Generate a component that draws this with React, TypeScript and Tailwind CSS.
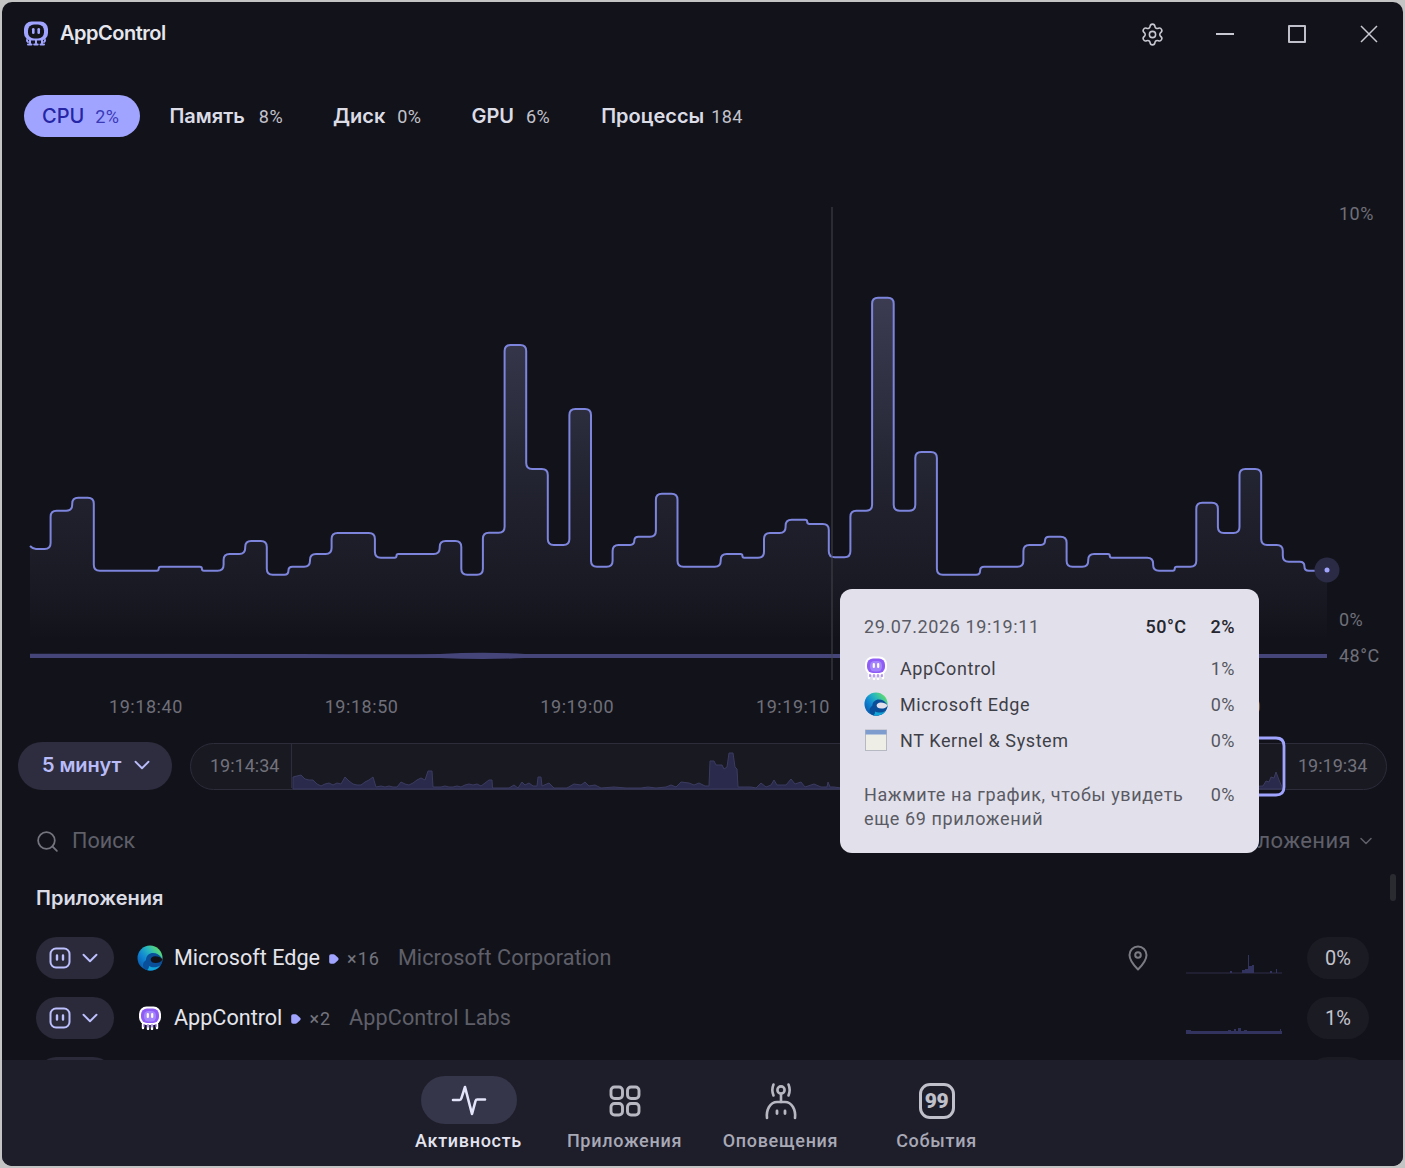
import { ChevronDown, Search, Settings } from "lucide-react";

const steps: [number, number][] = [
  [1, 549], [1, 510.7], [1, 497.7], [3, 570.7], [2, 566.7], [1, 570.7], [1, 554], [1, 541], [1, 574.7], [1, 566.7], [1, 554], [2, 533],
  [1, 557.7], [2, 554], [1, 541], [1, 574.7], [1, 532.7], [1, 345], [1, 469], [1, 545], [1, 409], [1, 566.7], [1, 545], [1, 536.7], [1, 493.7],
  [2, 566.7], [1, 554], [1, 557.7], [1, 533], [1, 519.7], [1, 524], [1, 557.3], [1, 510.7], [1, 297.7], [1, 510.7], [1, 452],
  [2, 574.7], [2, 566.7], [1, 545], [1, 536.7], [1, 566.7], [1, 554], [2, 557.7], [1, 570.7], [1, 566.7], [1, 502.7], [1, 533], [1, 469],
  [1, 545], [1, 561.7], [1, 570.7],
];

function buildLine() {
  const X0 = 30;
  const W = 1297 / 60;
  let i = 0;
  let d = `M${X0} ${steps[0][1] - 3} Q${X0 + 3} ${steps[0][1]} ${X0 + 6} ${steps[0][1]}`;
  for (let k = 0; k < steps.length - 1; k++) {
    i += steps[k][0];
    const x = X0 - 1 + i * W;
    const a = steps[k][1];
    const b = steps[k + 1][1];
    const r = Math.min(6, Math.abs(b - a) / 2);
    const s = b > a ? 1 : -1;
    d += ` L${(x - r).toFixed(1)} ${a} Q${x.toFixed(1)} ${a} ${x.toFixed(1)} ${a + s * r} L${x.toFixed(1)} ${b - s * r} Q${x.toFixed(1)} ${b} ${(x + r).toFixed(1)} ${b}`;
  }
  d += ` L1327 ${steps[steps.length - 1][1]}`;
  return d;
}
const linePath = buildLine();
const areaPath = `${linePath} L1327 640 L30 640 Z`;

const mini: [number, number][] = [
  [292, 12], [296, 13], [300, 14], [304, 10], [308, 9], [312, 9], [316, 5], [320, 3], [324, 5], [328, 6], [332, 4], [336, 6], [340, 5], [344, 12], [348, 8],
  [352, 5], [356, 4], [360, 4], [364, 7], [368, 9], [372, 12], [375, 2], [380, 3], [384, 2], [388, 3], [392, 2], [396, 2], [400, 7], [404, 5], [408, 4],
  [412, 6], [416, 9], [420, 11], [424, 9], [427, 18], [431, 18], [432, 2], [440, 2], [444, 3], [448, 2], [452, 2], [456, 3], [460, 2], [464, 4], [468, 5], [472, 4],
  [476, 5], [480, 3], [484, 6], [488, 9], [491, 9], [491.5, 1], [508, 1], [513, 4], [517, 1], [521, 7], [524, 4], [528, 6], [532, 3], [536, 3], [537, 12], [540, 12], [541, 3], [548, 6], [553, 1], [566, 1],
  [573, 5], [580, 4], [584, 7], [588, 3], [594, 4], [600, 1], [613, 2], [625, 1], [640, 1], [647, 2], [655, 1], [665, 2], [670, 4], [675, 2], [680, 7], [688, 6], [693, 4],
  [698, 6], [704, 3], [708, 3], [709, 28], [713, 28], [715, 24], [721, 24], [723, 20], [726, 22], [728, 36], [732, 36], [734, 22], [736, 20], [737, 2], [750, 2], [755, 1], [760, 6],
  [765, 2], [770, 4], [773, 9], [776, 4], [785, 4], [790, 10], [794, 5], [800, 7], [804, 2], [813, 5], [820, 2], [826, 2], [827, 7], [829, 2], [833, 2], [840, 1],
];
const miniPath = (pts: [number, number][]) => `M${pts[0][0]} 788 ` + pts.map((p) => `L${p[0]} ${788 - p[1]}`).join(" ") + ` L${pts[pts.length - 1][0]} 788 Z`;

function Logo({ size = 26 }: { size?: number }) {
  return (
    <svg width={size} height={size} viewBox="0 0 26 26" fill="none">
      <rect x="1" y="0.5" width="24" height="19" rx="7.5" fill="#a0a4ff" />
      <rect x="5" y="3.5" width="16" height="14" rx="6" fill="#13131a" />
      <rect x="9" y="7" width="2.6" height="6" rx="1.3" fill="#a0a4ff" />
      <rect x="14.4" y="7" width="2.6" height="6" rx="1.3" fill="#a0a4ff" />
      <path d="M7 19v3M13 19v3M19 19v3M5 23.5h3.5M11.2 23.5h3.5M17.5 23.5h3.5M4 19c0 1 .4 1.6 1 2M22 19c0 1-.4 1.6-1 2" stroke="#a0a4ff" strokeWidth="2" strokeLinecap="round" />
    </svg>
  );
}

function AppIcon({ size = 24 }: { size?: number }) {
  return (
    <svg width={size} height={size} viewBox="0 0 24 24" fill="none">
      <rect x="1" y="0.5" width="22" height="18.5" rx="7.5" fill="#fff" />
      <path d="M5 18v4M10 18v5M14 18v5M19 18v4" stroke="#fff" strokeWidth="2.4" strokeLinecap="round" />
      <rect x="3" y="2.5" width="18" height="14.5" rx="6" fill="#8f5df5" />
      <rect x="6" y="5" width="12" height="10.5" rx="4.5" fill="#a585fb" />
      <rect x="8.7" y="7" width="2.2" height="5" rx="1.1" fill="#fff" />
      <rect x="13.1" y="7" width="2.2" height="5" rx="1.1" fill="#fff" />
      <path d="M6 18.5v2M10 18.5v2.5M14 18.5v2.5M18 18.5v2" stroke="#8f5df5" strokeWidth="1.2" strokeLinecap="round" />
    </svg>
  );
}

function EdgeIcon({ cut, id, size = 26 }: { cut: string; id: string; size?: number }) {
  return (
    <svg width={size} height={size} viewBox="0 0 26 26" fill="none">
      <defs>
        <linearGradient id={`${id}a`} x1="23" y1="4" x2="3" y2="20" gradientUnits="userSpaceOnUse">
          <stop offset="0" stopColor="#62dc6c" />
          <stop offset="0.38" stopColor="#27b6c0" />
          <stop offset="0.72" stopColor="#0f84d2" />
          <stop offset="1" stopColor="#0b62b4" />
        </linearGradient>
      </defs>
      <circle cx="13" cy="13" r="12.5" fill={`url(#${id}a)`} />
      <path d="M9 15c0-4.5 3.5-7 7-7 3.5 0 6.5 1.5 8.5 4.8.7 1.2 1 2.5 1 3.2-2 7-6 9.5-12.5 9.5C8 25.5 6 23 6 20c0-2 1-3.500 3-5z" fill="#0a4f9a" />
      <path d="M25.5 14.5c-1.200 2.400-4 3.500-6.800 3.500-3 0-5-1.300-5-3.300 0-2 1.800-3.400 4.500-3.400 3 0 5.500.9 7.300 3.200z" fill={cut} />
      <path d="M12 21c3 1.800 8 1.800 11.500-.8C21.300 23.700 17.500 25.500 13 25.500c-1 0-2-.1-2.800-.4C11.500 24.300 12 22.500 12 21z" fill="#12a4d6" />
    </svg>
  );
}

function WinIcon() {
  return (
    <svg width="24" height="24" viewBox="0 0 24 24" fill="none">
      <rect x="1.5" y="2" width="21" height="20.5" fill="#eeeee6" stroke="#b6b8c2" strokeWidth="1" />
      <rect x="1.5" y="2" width="21" height="4.5" fill="#7f9ccf" />
    </svg>
  );
}

function Face() {
  return (
    <svg width="24" height="24" viewBox="0 0 24 24" fill="none">
      <rect x="2.5" y="2.5" width="19" height="19" rx="5.5" stroke="#bcbffc" strokeWidth="2" />
      <path d="M9 9.500v4M15 9.500v4" stroke="#bcbffc" strokeWidth="2.4" strokeLinecap="round" />
    </svg>
  );
}

function AppRow({ icon, name, count, vendor, pct, pin, spark }: { icon: React.ReactNode; name: string; count: string; vendor: string; pct: string; pin?: boolean; spark: React.ReactNode }) {
  return (
    <div className="flex h-[42px] items-center">
      <div className="flex h-[42px] w-[78px] items-center rounded-full bg-[#2a2a3a] pl-[12px]">
        <Face />
        <ChevronDown className="ml-[5px] h-[26px] w-[26px] text-[#bcbffc]" strokeWidth={1.8} />
      </div>
      <div className="ml-[23px] flex w-[26px] items-center justify-center">{icon}</div>
      <span className="ml-[11px] text-[21.6px] text-[#e4e4ec]">{name}</span>
      <svg className="ml-[8px] mt-[1px]" width="12" height="12" viewBox="0 0 10 10">
        <path d="M1 2.500a1.500 1.500 0 0 1 1.500-1.500h2a2 2 0 0 1 1.400.6l2.500 2.400a1.400 1.400 0 0 1 0 2l-2.500 2.400a2 2 0 0 1-1.400.6h-2a1.500 1.500 0 0 1-1.500-1.500z" fill="#a0a4ff" />
      </svg>
      <span className="ml-[7px] text-[18px] tracking-[1px] text-[#74747e]">{count}</span>
      <span className="ml-[18px] text-[21.6px] tracking-[0.1px] text-[#5f5f69]">{vendor}</span>
      <div className="flex-1" />
      {pin && (
        <svg className="mr-[38px]" width="20" height="26" viewBox="0 0 20 26" fill="none" stroke="#7b7b84" strokeWidth="2">
          <path d="M10 24.500C10 24.500 1.500 16 1.500 10a8.500 8.500 0 0 1 17 0C18.500 16 10 24.500 10 24.500Z" strokeLinejoin="round" />
          <circle cx="10" cy="10" r="2.8" />
        </svg>
      )}
      {spark}
      <div className="ml-[25px] flex h-[42px] w-[62px] items-center justify-center rounded-full bg-[#1b1b24] text-[20px] text-[#c4c4cc]">{pct}</div>
    </div>
  );
}

function TooltipRow({ icon, name, pct }: { icon: React.ReactNode; name: string; pct: string }) {
  return (
    <div className="flex h-[36px] items-center">
      <div className="flex w-[24px] items-center justify-center">{icon}</div>
      <span className="ml-[12px] flex-1 tracking-[0.6px] text-[#3f3f48]">{name}</span>
      <span className="tracking-[0.5px] text-[#56565f]">{pct}</span>
    </div>
  );
}

function Tab({ label, value, active, gap, ml }: { label: string; value: string; active?: boolean; gap: string; ml: string }) {
  return (
    <div className={`flex h-[42px] items-center ${ml} ${gap} ${active ? "rounded-full bg-[#a0a4ff] pl-[18px] pr-[21px]" : ""}`}>
      <span className={`font-['Inter'] text-[20px] ${active ? "font-medium text-[#2525a5]" : "font-semibold text-[#dcdce6]"}`}>{label}</span>
      <span className={`text-[18px] tracking-[0.4px] ${active ? "text-[#3a3ab8]" : "text-[#c2c2cc]"}`}>{value}</span>
    </div>
  );
}

function NavItem({ label, active, children }: { label: string; active?: boolean; children: React.ReactNode }) {
  return (
    <div className="flex w-[156px] flex-col items-center">
      <div className={`flex h-[48px] w-[96px] items-center justify-center rounded-full pt-[2px] ${active ? "bg-[#36364b]" : ""}`}>{children}</div>
      <span className={`mt-[3px] text-[18px] font-medium tracking-[0.7px] ${active ? "text-[#e4e4f0]" : "text-[#a9a9b6]"}`}>{label}</span>
    </div>
  );
}

export default function App() {
  const labels = ["19:18:40", "19:18:50", "19:19:00", "19:19:10", "19:19:20", "19:19:30"];
  return (
    <div className="h-[1168px] w-[1405px] overflow-hidden bg-[#c4c4c4] p-[2px] font-['Roboto',sans-serif]">
      <div className="relative flex h-[1164px] w-[1401px] flex-col overflow-hidden rounded-[10px] bg-[#12131a]">
        {/* Title bar */}
        <div className="flex h-[64px] shrink-0 items-center pl-[21px]">
          <Logo />
          <span className="ml-[11px] mb-[2px] font-['Inter'] text-[20px] font-semibold tracking-[-0.5px] text-[#e6e6ee]">AppControl</span>
          <div className="flex-1" />
          <Settings className="h-[25px] w-[25px] text-[#c8c8d2]" strokeWidth={1.5} />
          <div className="ml-[51px] h-[1.5px] w-[18px] bg-[#c8c8d2]" />
          <div className="ml-[54px] h-[18px] w-[18px] rounded-[1px] border-[2px] border-[#c0c0ca]" />
          <svg className="ml-[54px] mr-[25px]" width="18" height="18" viewBox="0 0 18 18" fill="none">
            <path d="M1 1l16 16M17 1L1 17" stroke="#c8c8d2" strokeWidth="1.5" />
          </svg>
        </div>

        {/* Tabs */}
        <div className="mt-[29px] flex h-[42px] shrink-0 items-center pl-[22px]">
          <Tab label="CPU" value="2%" active gap="gap-[11px]" ml="ml-0" />
          <Tab label="Память" value="8%" gap="gap-[14px]" ml="ml-[29px]" />
          <Tab label="Диск" value="0%" gap="gap-[12px]" ml="ml-[50px]" />
          <Tab label="GPU" value="6%" gap="gap-[12px]" ml="ml-[50px]" />
          <Tab label="Процессы" value="184" gap="gap-[7px]" ml="ml-[51px]" />
        </div>

        {/* Chart */}
        <div className="relative mt-[53px] h-[500px] shrink-0">
          <svg className="h-[500px] w-[1401px]" viewBox="2 190 1401 500" fill="none">
            <defs>
              <linearGradient id="cpuFill" x1="0" y1="297" x2="0" y2="640" gradientUnits="userSpaceOnUse">
                <stop offset="0" stopColor="#9293c8" stopOpacity="0.32" />
                <stop offset="0.6" stopColor="#9293c8" stopOpacity="0.11" />
                <stop offset="0.85" stopColor="#9293c8" stopOpacity="0.05" />
                <stop offset="1" stopColor="#9293c8" stopOpacity="0" />
              </linearGradient>
            </defs>
            <path d={areaPath} fill="url(#cpuFill)" />
            <path d={linePath} stroke="#7d84dc" strokeWidth="2" />
            <path d="M30 653.8 L300 654 Q400 654.500 440 654 Q483 651.500 525 654 L900 654 L1327 654 L1327 658 L900 658 L525 658 Q483 660 440 658 L300 658 L30 658 Z" fill="#45457a" />
            <line x1="832" y1="207" x2="832" y2="680" stroke="#44444c" strokeWidth="1" />
            <ellipse cx="1327" cy="570" rx="12.5" ry="12.5" fill="#2b2b45" />
            <circle cx="1327" cy="570" r="2.5" fill="#a0a4ff" />
          </svg>
          <span className="absolute left-[1337px] top-[10px] text-[18px] tracking-[0.5px] text-[#6f6f79]">10%</span>
          <span className="absolute left-[1337px] top-[416px] text-[18px] tracking-[0.5px] text-[#6f6f79]">0%</span>
          <span className="absolute left-[1337px] top-[452px] text-[18px] tracking-[0.5px] text-[#6f6f79]">48°C</span>
        </div>

        {/* Time axis */}
        <div className="flex h-[32px] shrink-0 items-center pl-[107px]">
          {labels.map((l) => (
            <span key={l} className="w-[216.5px] text-[18px] tracking-[0.55px] text-[#6f6f79]">{l}</span>
          ))}
        </div>

        {/* Range row */}
        <div className="mt-[20px] flex h-[48px] shrink-0 items-center pl-[16px]">
          <div className="flex h-[48px] w-[154px] items-center rounded-full bg-[#2d2d3f] pb-[2px] pl-[24px]">
            <span className="font-['Inter'] text-[20px] font-semibold tracking-[-0.1px] text-[#b9bcf8]">5 минут</span>
            <ChevronDown className="ml-[8px] h-[26px] w-[26px] text-[#b9bcf8]" strokeWidth={1.7} />
          </div>
          <div className="relative ml-[18px] flex h-[47px] w-[1197px] items-center overflow-visible rounded-full border-[1.5px] border-[#2c2c3a] bg-[#191922] pb-[1px]">
            <span className="ml-[19px] w-[81px] text-[18px] text-[#72727c]">19:14:34</span>
            <div className="h-full w-[992px] border-l-[1.5px] border-[#2c2c3a]" />
            <span className="ml-[15px] text-[18px] text-[#72727c]">19:19:34</span>
            <svg className="absolute left-[-190px] top-[-743px] h-[800px] w-[1405px]" viewBox="0 0 1405 800" fill="none">
              <path d={miniPath(mini)} fill="#2a2a4c" stroke="#3b3b60" strokeWidth="1" />
              <path d={miniPath([[1240, 2], [1262, 3], [1265, 8], [1268, 7], [1270, 12], [1273, 11], [1275, 17], [1278, 9], [1281, 2]])} fill="#2a2a4c" stroke="#3b3b60" strokeWidth="1" />
              <path d="M1090 737 H1275 Q1283 737 1283 745 V786 Q1283 794 1275 794 H1090" stroke="#a0a4ff" strokeWidth="2.8" />
            </svg>
          </div>
        </div>

        {/* Search row */}
        <div className="mt-[31px] flex h-[40px] shrink-0 items-center pl-[33px] pr-[27px]">
          <Search className="h-[25px] w-[25px] text-[#74747e]" strokeWidth={1.7} />
          <span className="ml-[12px] text-[21.6px] text-[#5f5f69]">Поиск</span>
          <div className="flex-1" />
          <span className="mb-[2px] text-[22px] tracking-[0.4px] text-[#5f5f69]">Все приложения</span>
          <ChevronDown className="ml-[5px] h-[20px] w-[20px] text-[#5f5f69]" strokeWidth={1.8} />
        </div>

        {/* Section title */}
        <div className="relative mt-[21px] flex h-[32px] shrink-0 items-center pl-[34px]">
          <span className="font-['Inter'] text-[20px] font-semibold text-[#dcdce6]">Приложения</span>
          <div className="absolute left-[1388px] top-[-8px] h-[27px] w-[6px] rounded-full bg-[#2a2b31]" />
        </div>

        {/* App list */}
        <div className="mt-[23px] flex min-h-0 flex-1 flex-col gap-[18px] overflow-hidden pl-[34px] pr-[34px]">
          <AppRow
            icon={<EdgeIcon cut="#12131a" id="e1" />}
            name="Microsoft Edge"
            count="×16"
            vendor="Microsoft Corporation"
            pct="0%"
            pin
            spark={
              <svg width="96" height="32" viewBox="0 0 96 32" fill="none">
                <path d="M0 31H96" stroke="#24243a" strokeWidth="1.5" />
                <path d="M56 31V28h3v-1h3V13h1v11h3v-1h2V31ZM44 31v-2h2v2ZM90 31v-4h1v4ZM84 31v-2h2v2Z" fill="#33335f" />
              </svg>
            }
          />
          <AppRow
            icon={<AppIcon />}
            name="AppControl"
            count="×2"
            vendor="AppControl Labs"
            pct="1%"
            spark={
              <svg width="96" height="32" viewBox="0 0 96 32" fill="none">
                <path d="M0 32V28h5v1H42v-1h3v1h3v-2h2v2h2v-3h3v3h3v-1h3v1H94v-2h1v2h1V32Z" fill="#33335f" />
              </svg>
            }
          />
          <AppRow icon={<span />} name="" count="" vendor="" pct="" spark={<svg width="96" height="32" />} />
        </div>

        {/* Bottom navigation */}
        <div className="flex h-[106px] shrink-0 justify-center bg-[#1e1e2b] pt-[16px]">
          <NavItem label="Активность" active>
            <svg width="36" height="36" viewBox="0 0 36 36" fill="none">
              <path d="M2 17h6.500c1 0 1.500-.5 1.800-1.500L14 4l7 27 3.500-13c.3-1 .8-1.500 1.800-1.500H34" stroke="#e4e4fb" strokeWidth="2.6" strokeLinecap="round" strokeLinejoin="round" />
            </svg>
          </NavItem>
          <NavItem label="Приложения">
            <svg width="32" height="32" viewBox="0 0 32 32" fill="none" stroke="#b8b8c2" strokeWidth="2.9">
              <rect x="2" y="2" width="11.5" height="11.5" rx="3.5" />
              <rect x="18.5" y="2" width="11.5" height="11.5" rx="3.5" />
              <rect x="2" y="18.5" width="11.5" height="11.5" rx="3.5" />
              <rect x="18.5" y="18.5" width="11.5" height="11.5" rx="3.5" />
            </svg>
          </NavItem>
          <NavItem label="Оповещения">
            <svg width="36" height="38" viewBox="0 0 36 38" fill="none" stroke="#b8b8c2" strokeWidth="2.6" strokeLinecap="round">
              <circle cx="18" cy="8" r="3.6" />
              <path d="M10.500 2.500c-1.500 3.500-1.500 7.500 0 11M25.500 2.500c1.500 3.500 1.500 7.500 0 11M18 12v8" />
              <path d="M4 36c-1-8 3-16 10-16h8c7 0 11 8 10 16" />
              <path d="M14 29v2.500M22 29v2.500" strokeWidth="2.8" />
            </svg>
          </NavItem>
          <NavItem label="События">
            <div className="flex h-[36px] w-[36px] items-center justify-center rounded-[11px] border-[3px] border-[#c0c0ca]">
              <span className="text-[21px] font-black leading-none tracking-[-0.5px] text-[#c0c0ca]">99</span>
            </div>
          </NavItem>
        </div>

        {/* Tooltip */}
        <div className="absolute left-[838px] top-[587px] h-[264px] w-[419px] rounded-[12px] bg-[#e2e1eb] px-[24px] pt-[24px] text-[18px]">
          <div className="flex h-[26px] items-center">
            <span className="flex-1 tracking-[0.6px] text-[#5a5a64]">29.07.2026 19:19:11</span>
            <span className="font-medium tracking-[0.5px] text-[#26262e]">50°C</span>
            <span className="ml-[24px] font-medium tracking-[0.5px] text-[#26262e]">2%</span>
          </div>
          <div className="mt-[11px]">
            <TooltipRow icon={<AppIcon size={24} />} name="AppControl" pct="1%" />
            <TooltipRow icon={<EdgeIcon cut="#e2e1eb" id="e2" />} name="Microsoft Edge" pct="0%" />
            <TooltipRow icon={<WinIcon />} name="NT Kernel & System" pct="0%" />
          </div>
          <div className="mt-[25px] flex items-start justify-between">
            <span className="w-[330px] leading-[24px] tracking-[0.6px] text-[#5a5a64]">Нажмите на график, чтобы увидеть еще 69 приложений</span>
            <span className="leading-[24px] tracking-[0.5px] text-[#56565f]">0%</span>
          </div>
        </div>
      </div>
    </div>
  );
}
